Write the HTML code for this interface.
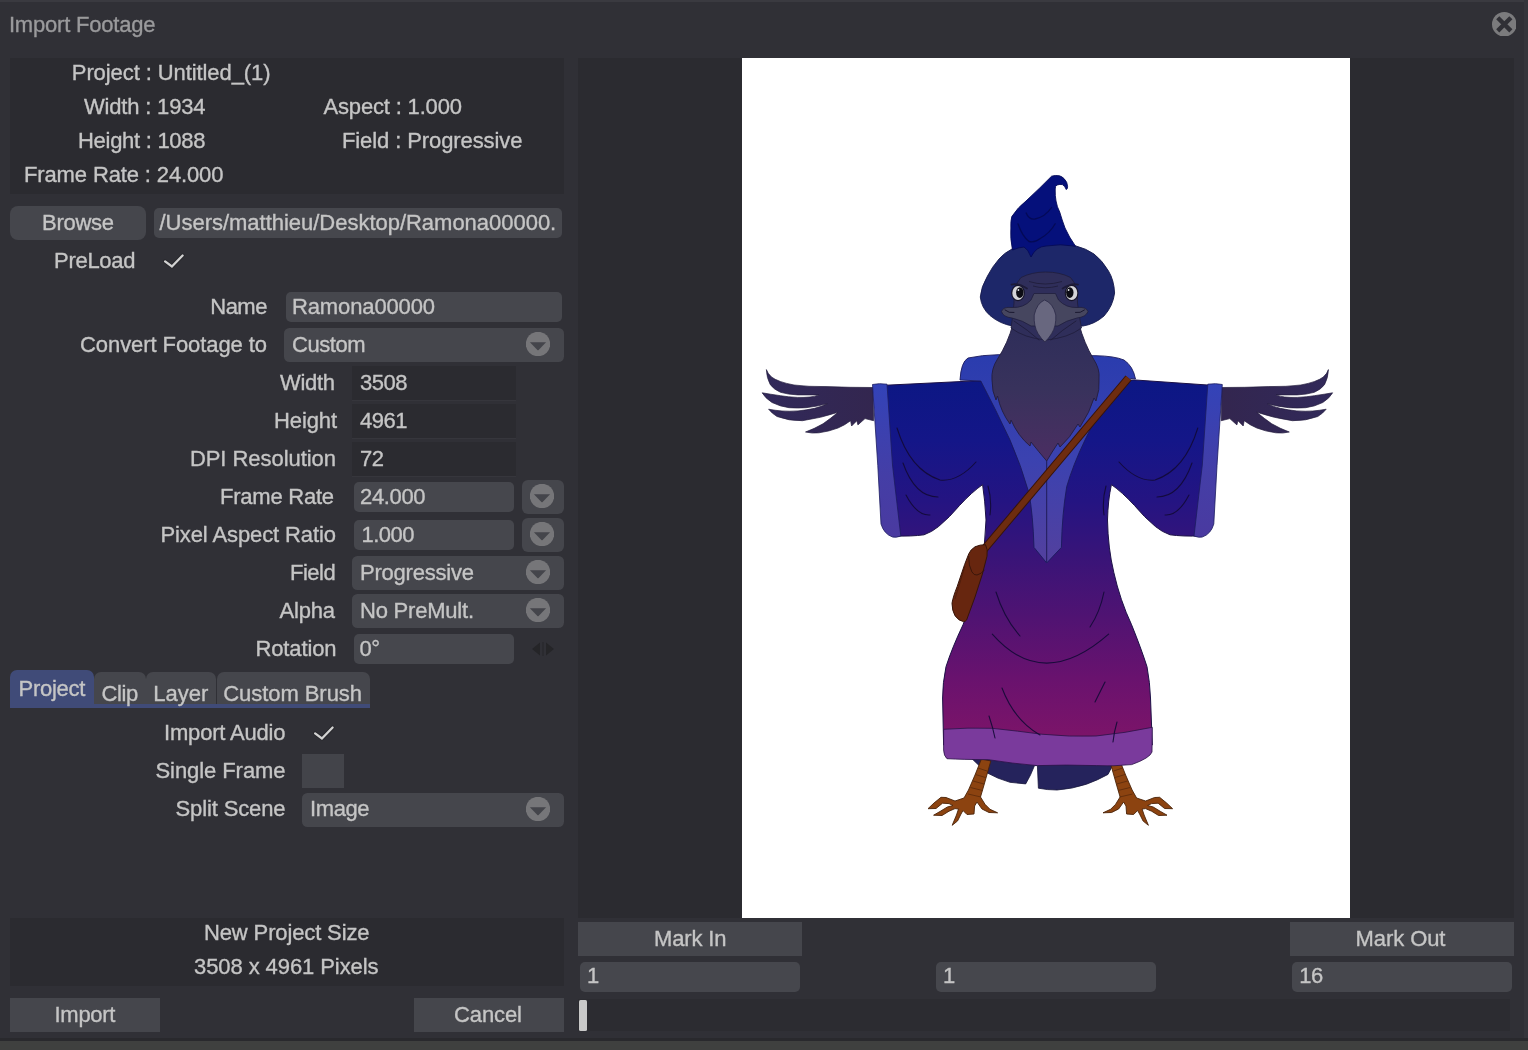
<!DOCTYPE html>
<html lang="en"><head><meta charset="utf-8"><title>Import Footage</title>
<style>
html,body{margin:0;padding:0;}
body{width:1528px;height:1050px;background:#303036;overflow:hidden;position:relative;font-family:"Liberation Sans",sans-serif;}
.b{position:absolute;display:block;}
.t{position:absolute;white-space:pre;font-size:22.0px;line-height:22.0px;height:22.0px;-webkit-text-stroke:0.35px currentColor;}
#txt{position:absolute;left:0;top:0;width:1528px;height:1050px;filter:blur(0.6px);}
</style></head><body>
<div class="b" style="left:0px;top:0px;width:1528px;height:1.5px;background:#3a3a40;border-radius:0px;"></div>
<div class="b" style="left:1524px;top:0px;width:4px;height:1038px;background:#35353b;border-radius:0px;"></div>
<div class="b" style="left:0px;top:1038px;width:1528px;height:3.400000000000091px;background:#29292d;border-radius:0px;"></div>
<div class="b" style="left:0px;top:1041.4px;width:1528px;height:8.599999999999909px;background:#3f403f;border-radius:0px;"></div>
<div class="b" style="left:10px;top:58px;width:554px;height:136px;background:#2b2b30;border-radius:0px;"></div>
<div class="b" style="left:10px;top:206px;width:136px;height:34px;background:#45464c;border-radius:8px;"></div>
<div class="b" style="left:154px;top:208px;width:408px;height:30px;background:#46474d;border-radius:5px;"></div>
<svg class="b" style="left:150px;top:240px" width="50" height="40" viewBox="0 0 50 40"><path d="M15.1 21.4 L21.9 26.5 L32.6 15.5" fill="none" stroke="#1f1f23" stroke-width="4" stroke-linecap="round" stroke-linejoin="round" opacity="0.55"/><path d="M15.1 21.4 L21.9 26.5 L32.6 15.5" fill="none" stroke="#d2d2d2" stroke-width="2.3" stroke-linecap="round" stroke-linejoin="miter"/></svg>
<div class="b" style="left:286px;top:292px;width:276px;height:30px;background:#46474d;border-radius:5px;"></div>
<div class="b" style="left:284px;top:328px;width:279.6px;height:33.5px;background:#45464c;border-radius:5.5px;"></div>
<svg class="b" style="left:526px;top:332px" width="24" height="24" viewBox="0 0 24 24"><circle cx="12" cy="12" r="12.2" fill="#767679"/><path d="M3.9 10.2 L20.1 10.2 L12.6 18 Q12 18.6 11.4 18 Z" fill="#44454b"/></svg>
<div class="b" style="left:352px;top:366px;width:164px;height:34px;background:#2b2b30;border-radius:0px;box-shadow:0 1px 0 #36363c;"></div>
<div class="b" style="left:352px;top:404px;width:164px;height:34px;background:#2b2b30;border-radius:0px;box-shadow:0 1px 0 #36363c;"></div>
<div class="b" style="left:352px;top:442px;width:164px;height:34px;background:#2b2b30;border-radius:0px;box-shadow:0 1px 0 #36363c;"></div>
<div class="b" style="left:354px;top:482px;width:160px;height:30px;background:#46474d;border-radius:5px;"></div>
<div class="b" style="left:522px;top:480px;width:41.60000000000002px;height:34px;background:#45464c;border-radius:6px;"></div>
<svg class="b" style="left:529.8px;top:484px" width="24" height="24" viewBox="0 0 24 24"><circle cx="12" cy="12" r="12.2" fill="#767679"/><path d="M3.9 10.2 L20.1 10.2 L12.6 18 Q12 18.6 11.4 18 Z" fill="#44454b"/></svg>
<div class="b" style="left:354px;top:520px;width:160px;height:30px;background:#46474d;border-radius:5px;"></div>
<div class="b" style="left:522px;top:518px;width:41.60000000000002px;height:34px;background:#45464c;border-radius:6px;"></div>
<svg class="b" style="left:529.8px;top:522px" width="24" height="24" viewBox="0 0 24 24"><circle cx="12" cy="12" r="12.2" fill="#767679"/><path d="M3.9 10.2 L20.1 10.2 L12.6 18 Q12 18.6 11.4 18 Z" fill="#44454b"/></svg>
<div class="b" style="left:352px;top:556px;width:211.60000000000002px;height:33.5px;background:#45464c;border-radius:5.5px;"></div>
<svg class="b" style="left:526px;top:560px" width="24" height="24" viewBox="0 0 24 24"><circle cx="12" cy="12" r="12.2" fill="#767679"/><path d="M3.9 10.2 L20.1 10.2 L12.6 18 Q12 18.6 11.4 18 Z" fill="#44454b"/></svg>
<div class="b" style="left:352px;top:594px;width:211.60000000000002px;height:33.5px;background:#45464c;border-radius:5.5px;"></div>
<svg class="b" style="left:526px;top:598px" width="24" height="24" viewBox="0 0 24 24"><circle cx="12" cy="12" r="12.2" fill="#767679"/><path d="M3.9 10.2 L20.1 10.2 L12.6 18 Q12 18.6 11.4 18 Z" fill="#44454b"/></svg>
<div class="b" style="left:354px;top:634px;width:160px;height:30px;background:#46474d;border-radius:5px;"></div>
<svg class="b" style="left:531px;top:641px" width="24" height="16" viewBox="0 0 24 16"><path d="M1 8 L9 1.5 L9 14.5 Z M23 8 L15 1.5 L15 14.5 Z" fill="#252528"/><rect x="11" y="1" width="2" height="14" fill="#2a2a2f"/></svg>
<div class="b" style="left:94px;top:672.25px;width:51.80000000000001px;height:33.75px;background:#45464c;border-radius:0px;border-radius:7px 7px 0 0;"></div>
<div class="b" style="left:145.8px;top:672.25px;width:70.69999999999999px;height:33.75px;background:#45464c;border-radius:0px;border-radius:7px 7px 0 0;"></div>
<div class="b" style="left:216.5px;top:672.25px;width:153.5px;height:33.75px;background:#45464c;border-radius:0px;border-radius:7px 7px 0 0;"></div>
<div class="b" style="left:10px;top:703.75px;width:360px;height:4.0px;background:#404b78;border-radius:0px;"></div>
<div class="b" style="left:10px;top:670px;width:84px;height:38px;background:#404b78;border-radius:0px;border-radius:7px 7px 0 0;"></div>
<svg class="b" style="left:300px;top:712px" width="50" height="40" viewBox="0 0 50 40"><path d="M15.1 21.4 L21.9 26.5 L32.6 15.5" fill="none" stroke="#1f1f23" stroke-width="4" stroke-linecap="round" stroke-linejoin="round" opacity="0.55"/><path d="M15.1 21.4 L21.9 26.5 L32.6 15.5" fill="none" stroke="#d2d2d2" stroke-width="2.3" stroke-linecap="round" stroke-linejoin="miter"/></svg>
<div class="b" style="left:302px;top:754px;width:42px;height:34px;background:#43444a;border-radius:0px;"></div>
<div class="b" style="left:302px;top:793px;width:261.6px;height:33.5px;background:#45464c;border-radius:5.5px;"></div>
<svg class="b" style="left:526px;top:797px" width="24" height="24" viewBox="0 0 24 24"><circle cx="12" cy="12" r="12.2" fill="#767679"/><path d="M3.9 10.2 L20.1 10.2 L12.6 18 Q12 18.6 11.4 18 Z" fill="#44454b"/></svg>
<div class="b" style="left:10px;top:918px;width:554px;height:68px;background:#2b2b30;border-radius:0px;"></div>
<div class="b" style="left:10px;top:998px;width:150px;height:34px;background:#45464c;border-radius:0px;"></div>
<div class="b" style="left:414px;top:998px;width:150px;height:34px;background:#45464c;border-radius:0px;"></div>
<div class="b" style="left:578px;top:58px;width:936px;height:860px;background:#2b2b30;border-radius:0px;"></div>
<div class="b" style="left:742px;top:58px;width:608px;height:860px;background:#ffffff;border-radius:0px;"></div>
<div class="b" style="left:578px;top:922px;width:224px;height:34px;background:#45464c;border-radius:0px;"></div>
<div class="b" style="left:1290px;top:922px;width:224px;height:34px;background:#45464c;border-radius:0px;"></div>
<div class="b" style="left:580px;top:962px;width:220px;height:30px;background:#46474d;border-radius:5px;"></div>
<div class="b" style="left:936px;top:962px;width:220px;height:30px;background:#46474d;border-radius:5px;"></div>
<div class="b" style="left:1292px;top:962px;width:220px;height:30px;background:#46474d;border-radius:5px;"></div>
<div class="b" style="left:578px;top:999px;width:932px;height:32px;background:#2c2c31;border-radius:0px;"></div>
<div class="b" style="left:579px;top:999.5px;width:8px;height:31.0px;background:#c9c9c9;border-radius:1.5px;"></div>
<svg class="b" style="left:1491.7px;top:11.6px" width="24.6" height="24.6" viewBox="0 0 24 24"><circle cx="12" cy="12" r="12" fill="#7b7b7d"/><path d="M5.6 5.6 L18.4 18.4 M18.4 5.6 L5.6 18.4" stroke="#303036" stroke-width="4.3" stroke-linecap="butt"/></svg>
<svg class="b" style="left:742px;top:58px" width="608" height="860" viewBox="742 58 608 860">
<defs>
<linearGradient id="robe" gradientUnits="userSpaceOnUse" x1="0" y1="380" x2="0" y2="735">
<stop offset="0" stop-color="#0c1784"/><stop offset="0.17" stop-color="#141688"/><stop offset="0.34" stop-color="#241482"/>
<stop offset="0.5" stop-color="#391478"/><stop offset="0.67" stop-color="#501372"/><stop offset="0.84" stop-color="#69126e"/><stop offset="1" stop-color="#7b1469"/>
</linearGradient>
<linearGradient id="collar" gradientUnits="userSpaceOnUse" x1="0" y1="355" x2="0" y2="563">
<stop offset="0" stop-color="#2a3cae"/><stop offset="0.5" stop-color="#3b42b0"/><stop offset="1" stop-color="#53409e"/>
</linearGradient>
<linearGradient id="cuff" gradientUnits="userSpaceOnUse" x1="0" y1="384" x2="0" y2="537">
<stop offset="0" stop-color="#3343b8"/><stop offset="0.6" stop-color="#443ea6"/><stop offset="1" stop-color="#4a3aa0"/>
</linearGradient>
<linearGradient id="chest" gradientUnits="userSpaceOnUse" x1="0" y1="330" x2="0" y2="460">
<stop offset="0" stop-color="#2f2e5a"/><stop offset="0.45" stop-color="#38325c"/><stop offset="1" stop-color="#4b2e62"/>
</linearGradient>
<linearGradient id="wing" gradientUnits="userSpaceOnUse" x1="762" y1="0" x2="873" y2="0">
<stop offset="0" stop-color="#31295a"/><stop offset="1" stop-color="#33264f"/>
</linearGradient>


</defs>

<!-- wings -->
<g>
<path d="M873 387.5 L850 387.3 L826 386.6 Q808 386.8 794 385 Q778 382 771.5 377 Q767.5 373.5 766.4 369.6 Q766.6 378 770.3 384.7 Q774 389.5 780.5 392.3 Q788 394.5 797.6 394.9 L818.8 394.9 Q814 396.6 810 397 Q804 397.6 797.6 397.4 Q788 397 780.5 395.7 Q770 394.2 762.2 392.8 Q765 398 772 402.5 Q780 406.5 789 407.7 Q798 408.3 806 407.7 Q817 406.5 827.3 403.8 Q821 406.8 814.6 408.3 Q806 410.2 798 410.9 Q789 411.5 782 411 Q775 410.4 768.6 409.2 Q772 413.5 777 416.5 Q789 421 802.4 420.7 Q821 418 838 412.3 Q830 419 823 423.8 Q814 429 805.5 432 Q812 433.6 819 432.8 Q829 431.5 838 428 Q845 425 850.6 420.7 L851.6 426 L856.9 420.7 L857.9 424.9 L865 418.6 L873.6 420.7 Z" fill="url(#wing)" stroke="#241d3e" stroke-width="0.7" stroke-linejoin="round"/>
</g>
<g transform="translate(2094.8 0) scale(-1 1)">
<path d="M873 387.5 L850 387.3 L826 386.6 Q808 386.8 794 385 Q778 382 771.5 377 Q767.5 373.5 766.4 369.6 Q766.6 378 770.3 384.7 Q774 389.5 780.5 392.3 Q788 394.5 797.6 394.9 L818.8 394.9 Q814 396.6 810 397 Q804 397.6 797.6 397.4 Q788 397 780.5 395.7 Q770 394.2 762.2 392.8 Q765 398 772 402.5 Q780 406.5 789 407.7 Q798 408.3 806 407.7 Q817 406.5 827.3 403.8 Q821 406.8 814.6 408.3 Q806 410.2 798 410.9 Q789 411.5 782 411 Q775 410.4 768.6 409.2 Q772 413.5 777 416.5 Q789 421 802.4 420.7 Q821 418 838 412.3 Q830 419 823 423.8 Q814 429 805.5 432 Q812 433.6 819 432.8 Q829 431.5 838 428 Q845 425 850.6 420.7 L851.6 426 L856.9 420.7 L857.9 424.9 L865 418.6 L873.6 420.7 Z" fill="url(#wing)" stroke="#241d3e" stroke-width="0.7" stroke-linejoin="round"/>
</g>

<!-- tail feathers -->
<path d="M968 755 L986.4 772.5 Q998 779 1010 782.3 L1025.7 783.9 Q1031 775 1034.5 765.6 L1037.4 765.6 L1038.4 788.2 Q1047 790 1057 790 Q1072 789 1086.5 784.2 Q1098 780 1108 774.4 L1118 755 Z" fill="#25235c" stroke="#17153a" stroke-width="0.8"/>

<!-- legs / feet -->
<g>
<path d="M981.4 759 L975 775 L968.5 790 L964 798 L955 801 L946 797.5 L941 797.3 L934 803 L928 808.7 L936 808.5 L942.5 803.2 L949 803.6 L953 805.5 L947.4 807 L940 811.5 L933.6 815.2 L942 815.5 L949 811.2 L955 808.6 L958.5 809 L956.5 815 L952.2 825.3 L957.5 821 L961 814 L963 810.5 L967 814.5 L974 814 L974.6 806 L977 802 L982 809 L989 812.5 L997.6 812.8 L990 809.3 L985 804.3 L980.5 797 L984 785 L990.8 761 Z" fill="#8c4310" stroke="#4a2208" stroke-width="0.9" stroke-linejoin="round"/>
<path d="M978 768 L987 771 M975.5 774.5 L985.5 777.5 M973 781 L984 784 M970.5 787.5 L982.5 790.5 M968 794 L981 797" stroke="#5a2a0a" stroke-width="0.8" fill="none"/>
</g>
<g transform="translate(2100.6 0) scale(-1 1)">
<path d="M981.4 759 L975 775 L968.5 790 L964 798 L955 801 L946 797.5 L941 797.3 L934 803 L928 808.7 L936 808.5 L942.5 803.2 L949 803.6 L953 805.5 L947.4 807 L940 811.5 L933.6 815.2 L942 815.5 L949 811.2 L955 808.6 L958.5 809 L956.5 815 L952.2 825.3 L957.5 821 L961 814 L963 810.5 L967 814.5 L974 814 L974.6 806 L977 802 L982 809 L989 812.5 L997.6 812.8 L990 809.3 L985 804.3 L980.5 797 L984 785 L990.8 761 Z" fill="#8c4310" stroke="#4a2208" stroke-width="0.9" stroke-linejoin="round"/>
<path d="M978 768 L987 771 M975.5 774.5 L985.5 777.5 M973 781 L984 784 M970.5 787.5 L982.5 790.5 M968 794 L981 797" stroke="#5a2a0a" stroke-width="0.8" fill="none"/>
</g>

<!-- robe main silhouette (body + sleeves) -->
<path d="M972 381 L880 385.5 L884 500 L893 536 Q912 536.5 924 534.8 Q932 532 938.6 526.5 Q950 517 959.5 505.5 Q972 492 982.6 484.6 Q985 500 986 520 Q985 548 980.8 572.4 Q973 600 963 624.8 Q952 648 946 666.7 Q942.6 683 942.6 698 L943.6 745 L1152.3 745 L1150.5 698 Q1150 683 1147 666.7 Q1141 648 1131.6 624.8 Q1120 600 1113.8 572.4 Q1108 548 1107.5 520 Q1108 500 1111.4 484.6 Q1122 492 1134.5 505.5 Q1144 517 1155.4 526.5 Q1162 532 1170 534.8 Q1182 536.5 1201.8 536 L1210.8 500 L1214.8 385.5 L1135.5 380 Z" fill="url(#robe)" stroke="#1c1146" stroke-width="1"/>

<!-- hem band -->
<path d="M943.6 729.3 Q968 727.5 992.3 728.3 Q1018 731 1041.4 734.2 Q1070 737 1096 736 Q1126 733 1152.3 727.3 L1152 752 Q1150 758 1131.7 764.6 Q1112 766.5 1096.3 765.6 Q1066 764.5 1037.4 765.6 Q1012 763.5 988.4 759.7 Q962 759.5 947 758.7 Q943.8 756 943.6 750 Z" fill="#7a3a9c" stroke="#2a1146" stroke-width="0.8"/>

<!-- cuffs -->
<path d="M872.5 384.5 Q879 383 887 384.2 L892.5 465 L900.8 536 Q896 538 892.5 537 Q884 534 881 524 L877.8 465.7 Z" fill="url(#cuff)" stroke="#1c1c60" stroke-width="0.8"/>
<path d="M1222.3 384.5 Q1216 383 1207.8 384.2 L1202.3 465 L1194 536 Q1199 538 1202.3 537 Q1211 534 1213.8 524 L1217 465.7 Z" fill="url(#cuff)" stroke="#1c1c60" stroke-width="0.8"/>

<!-- collar / placket -->
<path d="M960 380 Q961 362 968 358 Q982 355 998 354.7 L1096 355.7 Q1114 356 1124 360 Q1133 366 1135.5 379 L1131 378.5 Q1118 386 1108.6 396.6 Q1095 418 1085 440 Q1073 465 1066.7 486.7 Q1062 515 1061.4 547.4 L1046.7 563 L1034 547.4 Q1033 515 1029 493 Q1021 465 1010 440 Q996 410 980.8 381 Z" fill="url(#collar)" stroke="#1a1a5c" stroke-width="0.9"/>
<path d="M1046.7 461 L1046.7 562" stroke="#1c1850" stroke-width="0.9" fill="none"/>

<!-- robe fold lines -->
<g fill="none" stroke="#120a36" stroke-width="1.1" stroke-linecap="round" opacity="0.9">
<path d="M897 428 Q910 470 940 480 Q958 482 976 462"/>
<path d="M903 463 Q915 497 938 497"/>
<path d="M906 495 Q917 516 930 515"/>
<path d="M1197.8 428 Q1185 470 1155 480 Q1137 482 1119 462"/>
<path d="M1192 463 Q1180 497 1157 497"/>
<path d="M1189 495 Q1178 516 1165 515"/>
<path d="M996 592 Q1004 618 1020 636"/>
<path d="M992.3 634.2 Q1043 692 1108.6 634.2"/>
<path d="M1104 592 Q1100 612 1090 627"/>
<path d="M1105 682 L1095 702"/>
<path d="M1002 688 Q1014 720 1040 735"/>
<path d="M989 716 Q993 728 995 738"/>
<path d="M1117 722 Q1114 732 1113 742"/>
<path d="M988 486 Q992 500 990 515"/>
<path d="M1106 486 Q1102 500 1104 515"/>
</g>

<!-- strap -->
<path d="M1128.5 378 L983.5 550" stroke="#36140a" stroke-width="8" fill="none"/>
<path d="M1128.5 378 L983.5 550" stroke="#6e2c0f" stroke-width="6" fill="none"/>

<!-- bag -->
<path d="M985.5 544.7 Q980 544.5 975 546.8 Q970.5 549.5 968.7 554 L964.6 564.6 L957.2 586.5 Q953 597 952 603.3 Q952 610.5 955.1 615.9 Q959 621 963.5 621.6 Q965.5 621.5 966.6 620 L975 597 L982.4 574 L987 556.2 Q988 549 985.5 544.7 Z" fill="#67260f" stroke="#36140a" stroke-width="1"/>
<path d="M968.7 556.2 Q968.5 566 971.9 571.9 Q974 575.5 977 575 Q981.5 574 984.5 569.8" stroke="#36140a" stroke-width="0.9" fill="none"/>
<path d="M965 566 L955 599" stroke="#4a1a0a" stroke-width="0.8" fill="none"/>

<!-- chest feathers + neck -->
<path d="M1013 324 Q1008 343 997.5 359 Q991 369 992 380 Q992 392 996 400 L997.5 396 Q1001 412 1010 424 L1011 420 Q1018 436 1030 446 L1031 442 Q1039 452 1046.7 461 Q1052 452 1058 443 L1060 447 Q1070 438 1078 424 L1080 427 Q1090 412 1094 398 L1096 401 Q1100 390 1099 378 Q1100 369 1093.5 359 Q1084 343 1079 324 Z" fill="url(#chest)" stroke="#221d40" stroke-width="0.9" stroke-linejoin="round"/>

<!-- hat brim -->
<path d="M1012 249 Q1004 253 999 259 Q992 267 987.5 276 Q981 287 980.3 297 Q981.5 308 990 315.5 Q1000 324 1013 326 L1083 326 Q1095 324 1104 316 Q1113 306 1114.6 293 Q1114 280 1108.5 271 Q1102 260 1094 254 Q1086 248.5 1076 246 Q1044 240 1012 249 Z" fill="#1d2769" stroke="#151a4c" stroke-width="0.9"/>

<!-- face -->
<path d="M1014 303 Q1013 286 1021 277.5 Q1032 272 1045.5 272 Q1060 272 1070.5 277.5 Q1078.5 286 1077.5 303 Q1079 316 1081.5 328 Q1068 338 1046 340 Q1024 338 1011 328 Q1013 316 1014 303 Z" fill="#2f2e5a" stroke="#1f1d3b" stroke-width="0.8"/>
<!-- brow lines -->
<path d="M1029 281.5 Q1045 286.5 1062 281.5 M1033 286 Q1045 289.5 1058 286" stroke="#201e3c" stroke-width="0.9" fill="none"/>
<!-- mouth / cere -->
<path d="M1001.5 311.5 Q1003 306.5 1012 307.5 Q1024 308 1031 300 L1034 293.5 L1055.5 293.5 L1058.5 300 Q1066 308 1077 307.5 Q1086 306.5 1088 311.5 Q1086 317 1077 318 Q1066 320.5 1058 326 L1031 326 Q1023 320.5 1012 318 Q1003 317 1001.5 311.5 Z" fill="#46465f" stroke="#201e3c" stroke-width="0.8"/>
<path d="M1005 310 Q1009 313.5 1014 312.5 M1084.5 310 Q1080.5 313.5 1075.5 312.5" stroke="#1a1830" stroke-width="1" fill="none" stroke-linecap="round"/>
<!-- face feathers under the mouth -->
<path d="M1014 321 Q1028 330 1039 340 M1076 321 Q1062 330 1051 340" stroke="#1f1d3b" stroke-width="0.9" fill="none" stroke-linecap="round" stroke-linejoin="round"/>
<!-- beak -->
<path d="M1044.6 300 Q1037 303 1034.2 315 Q1033.6 326 1038 333.5 Q1041 338.5 1044.9 342 Q1048.6 338.5 1051.7 333.5 Q1056.4 326 1055.8 315 Q1053 303 1044.6 300 Z" fill="#68677f" stroke="#2a2846" stroke-width="0.8"/>
<!-- eyes -->
<g>
<ellipse cx="1018" cy="293" rx="6.9" ry="8.2" fill="#17152a"/><ellipse cx="1018" cy="293" rx="5.7" ry="7" fill="#d4d4d8"/><ellipse cx="1019.8" cy="292.6" rx="3.7" ry="5.3" fill="#0c0c14"/><circle cx="1018.4" cy="290" r="0.9" fill="#e8e8ee"/>
<ellipse cx="1071.6" cy="293" rx="6.9" ry="8.2" fill="#17152a"/><ellipse cx="1071.6" cy="293" rx="5.7" ry="7" fill="#d4d4d8"/><ellipse cx="1069.8" cy="292.6" rx="3.7" ry="5.3" fill="#0c0c14"/><circle cx="1068.6" cy="290" r="0.9" fill="#e8e8ee"/>
<path d="M1011.5 284.6 Q1018 282.6 1027 288.5 M1078 284.6 Q1071.6 282.6 1062.6 288.5" stroke="#1d1b38" stroke-width="1.7" fill="none" stroke-linecap="round"/>
</g>

<!-- hat cone -->
<path d="M1012.5 250 Q1010 238 1010.9 228 Q1010.5 221 1011.8 216.6 Q1018 207 1026 201 Q1040 188 1051.6 176.2 Q1055 175 1059.5 175.8 Q1062 176.6 1064 178.6 Q1067.5 182 1067.6 186.7 Q1067.5 189 1066.3 189.6 Q1065 186 1062.4 184.6 Q1060 184 1057 185 Q1055 186 1055.2 189 Q1055 196 1056 201 Q1057 207 1059.7 212 Q1062 220 1065 228 Q1069 237 1075.5 246.2 Q1060 243.5 1046 246 Q1036 246.5 1031 257 Q1028 249 1024 247 Q1018 247.5 1012.5 250 Z" fill="#05107b" stroke="#040a58" stroke-width="0.9" stroke-linejoin="round"/>
<path d="M1026.2 213 Q1029 220 1035 219 Q1045 217 1051.6 207.5 M1018 223.8 Q1022 236 1029 241.5 Q1035 243 1040.7 238.3 Q1050 233 1055.2 223.8" stroke="#030850" stroke-width="1.3" fill="none" opacity="0.85" stroke-linecap="round"/>
</svg>

<div id="txt">
<div class="t" id="t0" style="left:8.90px;top:14.33px;letter-spacing:-0.200px;color:#9a9a9c">Import Footage</div>
<div class="t" id="t1" style="left:71.80px;top:62.13px;letter-spacing:-0.086px;color:#c5c5c5">Project : Untitled_(1)</div>
<div class="t" id="t2" style="left:83.90px;top:96.13px;letter-spacing:-0.173px;color:#c5c5c5">Width : 1934</div>
<div class="t" id="t3" style="left:78.00px;top:130.13px;letter-spacing:-0.283px;color:#c5c5c5">Height : 1088</div>
<div class="t" id="t4" style="left:24.00px;top:164.13px;letter-spacing:-0.128px;color:#c5c5c5">Frame Rate : 24.000</div>
<div class="t" id="t5" style="left:323.50px;top:96.13px;letter-spacing:-0.169px;color:#c5c5c5">Aspect : 1.000</div>
<div class="t" id="t6" style="left:341.90px;top:130.13px;letter-spacing:-0.089px;color:#c5c5c5">Field : Progressive</div>
<div class="t" id="t7" style="left:42.00px;top:211.63px;letter-spacing:-0.280px;color:#c5c5c5">Browse</div>
<div class="t" id="t8" style="left:159.50px;top:211.63px;letter-spacing:-0.020px;color:#c5c5c5">/Users/matthieu/Desktop/Ramona00000.</div>
<div class="t" id="t9" style="left:54.00px;top:249.63px;letter-spacing:-0.283px;color:#c5c5c5">PreLoad</div>
<div class="t" id="t10" style="left:210.25px;top:295.88px;letter-spacing:-0.500px;color:#c5c5c5">Name</div>
<div class="t" id="t11" style="left:292.00px;top:295.88px;letter-spacing:-0.130px;color:#c5c5c5">Ramona00000</div>
<div class="t" id="t12" style="left:80.00px;top:334.13px;letter-spacing:-0.076px;color:#c5c5c5">Convert Footage to</div>
<div class="t" id="t13" style="left:292.00px;top:334.13px;letter-spacing:-0.460px;color:#c5c5c5">Custom</div>
<div class="t" id="t14" style="left:280.00px;top:371.63px;letter-spacing:-0.300px;color:#c5c5c5">Width</div>
<div class="t" id="t15" style="left:360.00px;top:371.63px;letter-spacing:-0.467px;color:#c5c5c5">3508</div>
<div class="t" id="t16" style="left:274.00px;top:409.63px;letter-spacing:-0.120px;color:#c5c5c5">Height</div>
<div class="t" id="t17" style="left:360.00px;top:409.63px;letter-spacing:-0.500px;color:#c5c5c5">4961</div>
<div class="t" id="t18" style="left:189.90px;top:447.63px;letter-spacing:-0.046px;color:#c5c5c5">DPI Resolution</div>
<div class="t" id="t19" style="left:360.00px;top:447.63px;letter-spacing:-0.500px;color:#c5c5c5">72</div>
<div class="t" id="t20" style="left:220.10px;top:485.73px;letter-spacing:-0.244px;color:#c5c5c5">Frame Rate</div>
<div class="t" id="t21" style="left:360.00px;top:485.73px;letter-spacing:-0.360px;color:#c5c5c5">24.000</div>
<div class="t" id="t22" style="left:160.50px;top:523.63px;letter-spacing:-0.106px;color:#c5c5c5">Pixel Aspect Ratio</div>
<div class="t" id="t23" style="left:361.50px;top:523.63px;letter-spacing:-0.500px;color:#c5c5c5">1.000</div>
<div class="t" id="t24" style="left:290.00px;top:561.63px;letter-spacing:-0.500px;color:#c5c5c5">Field</div>
<div class="t" id="t25" style="left:360.00px;top:561.63px;letter-spacing:-0.220px;color:#c5c5c5">Progressive</div>
<div class="t" id="t26" style="left:279.50px;top:599.63px;letter-spacing:-0.200px;color:#c5c5c5">Alpha</div>
<div class="t" id="t27" style="left:360.00px;top:599.63px;letter-spacing:-0.210px;color:#c5c5c5">No PreMult.</div>
<div class="t" id="t28" style="left:255.50px;top:637.63px;letter-spacing:-0.129px;color:#c5c5c5">Rotation</div>
<div class="t" id="t29" style="left:359.50px;top:637.63px;letter-spacing:-0.500px;color:#c5c5c5">0°</div>
<div class="t" id="t30" style="left:18.50px;top:677.63px;letter-spacing:-0.250px;color:#c5c5c5">Project</div>
<div class="t" id="t31" style="left:101.50px;top:683.13px;letter-spacing:-0.383px;color:#c5c5c5">Clip</div>
<div class="t" id="t32" style="left:153.25px;top:683.13px;letter-spacing:0.000px;color:#c5c5c5">Layer</div>
<div class="t" id="t33" style="left:223.25px;top:683.13px;letter-spacing:-0.059px;color:#c5c5c5">Custom Brush</div>
<div class="t" id="t34" style="left:164.00px;top:721.73px;letter-spacing:-0.182px;color:#c5c5c5">Import Audio</div>
<div class="t" id="t35" style="left:155.50px;top:760.13px;letter-spacing:-0.073px;color:#c5c5c5">Single Frame</div>
<div class="t" id="t36" style="left:175.50px;top:798.13px;letter-spacing:-0.130px;color:#c5c5c5">Split Scene</div>
<div class="t" id="t37" style="left:310.00px;top:798.13px;letter-spacing:-0.400px;color:#c5c5c5">Image</div>
<div class="t" id="t38" style="left:204.00px;top:922.13px;letter-spacing:-0.133px;color:#c5c5c5">New Project Size</div>
<div class="t" id="t39" style="left:194.00px;top:955.88px;letter-spacing:-0.082px;color:#c5c5c5">3508 x 4961 Pixels</div>
<div class="t" id="t40" style="left:54.50px;top:1004.13px;letter-spacing:-0.280px;color:#c5c5c5">Import</div>
<div class="t" id="t41" style="left:454.00px;top:1004.13px;letter-spacing:-0.100px;color:#c5c5c5">Cancel</div>
<div class="t" id="t42" style="left:654.00px;top:928.13px;letter-spacing:-0.150px;color:#c5c5c5">Mark In</div>
<div class="t" id="t43" style="left:1355.50px;top:928.13px;letter-spacing:-0.071px;color:#c5c5c5">Mark Out</div>
<div class="t" id="t44" style="left:587.00px;top:965.13px;letter-spacing:0.000px;color:#c5c5c5">1</div>
<div class="t" id="t45" style="left:942.90px;top:965.13px;letter-spacing:0.000px;color:#c5c5c5">1</div>
<div class="t" id="t46" style="left:1299.25px;top:965.13px;letter-spacing:-0.500px;color:#c5c5c5">16</div>
</div>
</body></html>
